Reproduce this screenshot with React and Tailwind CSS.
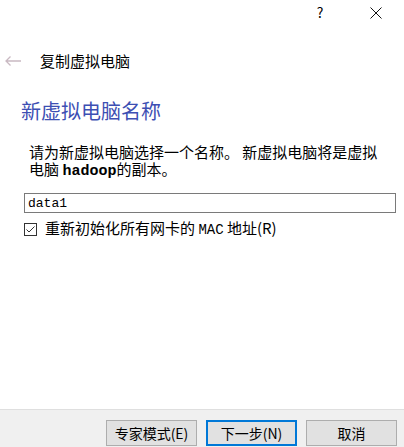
import React, { useState } from 'react'

const cjk = "font-['Microsoft_YaHei','Noto_Sans_CJK_SC',sans-serif]"
const mono = "font-['Liberation_Mono','Noto_Sans_CJK_SC',monospace]"

const BackArrow = () => (
  <svg width="16" height="10" viewBox="0 0 16 10" className="text-[#c9b9c2]">
    <path d="M1 5h15M5.5 0.5L1 5l4.5 4.5" fill="none" stroke="currentColor" strokeWidth="1.3" />
  </svg>
)

const CloseIcon = () => (
  <svg width="12" height="12" viewBox="0 0 12 12">
    <path d="M0.5 0.5l11 11M11.5 0.5l-11 11" stroke="#111" strokeWidth="1" />
  </svg>
)

const Button = ({ children, primary }) => (
  <button
    className={`w-[91px] h-[26px] bg-[#e1e1e1] text-[14px] text-black ${cjk} ${primary ? 'border-2 border-[#0078d7]' : 'border border-[#adadad]'}`}
  >
    {children}
  </button>
)

const App = () => {
  const [name, setName] = useState('data1')
  const [reset, setReset] = useState(true)

  return (
    <div className="w-[404px] h-[447px] bg-white flex flex-col text-black">
      {/* title bar */}
      <div className="flex justify-end h-[25px] pr-[5px] gap-[10px]">
        <div className={`w-[46px] flex items-center justify-center text-[14px] ${cjk}`}>?</div>
        <div className="w-[46px] flex items-center justify-center">
          <CloseIcon />
        </div>
      </div>

      {/* wizard header */}
      <div className="flex items-center h-[26px] mt-[23px]">
        <div className="w-[40px] pl-[5px] flex items-center">
          <BackArrow />
        </div>
        <span className={`text-[15px] ${cjk}`}>复制虚拟电脑</span>
      </div>

      <h1 className={`mt-[24px] ml-[21px] text-[20px] leading-[26px] text-[#3d4fb3] ${cjk}`}>新虚拟电脑名称</h1>

      <p className={`mt-[19px] ml-[29px] mr-[20px] text-[15px] leading-[17px] ${cjk}`}>
        请为新虚拟电脑选择一个名称。 新虚拟电脑将是虚拟电脑 <b className={`${mono} font-bold leading-none`}>hadoop</b>的副本。
      </p>

      <input
        value={name}
        onChange={(e) => setName(e.target.value)}
        className={`mt-[14px] ml-[24px] w-[372px] h-[20px] border border-[#7a7a7a] px-[3px] text-[13px] outline-none ${mono}`}
      />

      <label className="flex items-center mt-[8px] ml-[24px] h-[16px] gap-[8px] cursor-pointer">
        <span
          onClick={() => setReset(!reset)}
          className="w-[13px] h-[13px] border border-[#333] bg-white flex items-center justify-center"
        >
          {reset && (
            <svg width="9" height="7" viewBox="0 0 9 7">
              <path d="M0.5 3.5l2.5 2.5l5.5-5.5" fill="none" stroke="#333" strokeWidth="1" />
            </svg>
          )}
        </span>
        <span className={`text-[15px] ${cjk}`}>
          重新初始化所有网卡的 <span className={`${mono} text-[14px]`}>MAC</span> 地址(R)
        </span>
      </label>

      <div className="flex-1" />

      {/* footer */}
      <div className="h-[38px] bg-[#f0f0f0] border-t border-[#dfdfdf] flex justify-end items-end gap-[9px] pr-[7px] pb-[1px]">
        <Button>专家模式(E)</Button>
        <Button primary>下一步(N)</Button>
        <Button>取消</Button>
      </div>
    </div>
  )
}

export default App
